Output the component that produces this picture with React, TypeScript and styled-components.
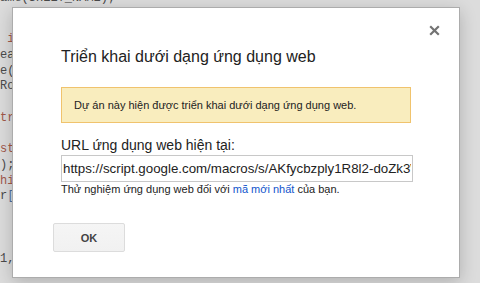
import React from 'react';
import styled, { createGlobalStyle } from 'styled-components';

const GlobalStyle = createGlobalStyle`
  html, body {
    margin: 0;
    padding: 0;
    background: #dcdcdc;
  }
  * {
    box-sizing: border-box;
  }
`;

type Tone = 'plain' | 'keyword' | 'bracket';

interface CodeLine {
  parts: { text: string; tone: Tone }[];
}

const codeLines: CodeLine[] = [
  { parts: [{ text: 'ame(SHEET_NAME);', tone: 'plain' }] },
  { parts: [] },
  { parts: [{ text: ' if (sheet == null) {', tone: 'keyword' }] },
  { parts: [{ text: 'eate', tone: 'plain' }] },
  { parts: [{ text: 'e(', tone: 'plain' }, { text: 'SHEET_NAME', tone: 'plain' }] },
  { parts: [{ text: 'Row(', tone: 'plain' }] },
  { parts: [] },
  { parts: [{ text: 'try', tone: 'keyword' }] },
  { parts: [] },
  { parts: [{ text: 'st', tone: 'keyword' }] },
  { parts: [{ text: ');', tone: 'plain' }] },
  { parts: [{ text: 'hile', tone: 'keyword' }] },
  { parts: [{ text: 'r', tone: 'plain' }, { text: '[', tone: 'bracket' }] },
  { parts: [] },
  { parts: [] },
  { parts: [] },
  { parts: [{ text: '1,', tone: 'plain' }] },
];

const toneColor: Record<Tone, string> = {
  plain: '#4a4a4a',
  keyword: '#a0584a',
  bracket: '#4d6f9e',
};

export default function App() {
  return (
    <>
      <GlobalStyle />
      <Page>
        <CodeBackdrop>
          {codeLines.map((line, i) => (
            <CodeRow key={i} $first={i === 0}>
              {line.parts.map((p, j) => (
                <Token key={j} $tone={p.tone}>
                  {p.text}
                </Token>
              ))}
            </CodeRow>
          ))}
        </CodeBackdrop>

        <Dialog role="dialog">
          <CloseButton aria-label="Đóng">
            <svg width="11" height="11" viewBox="0 0 11 11">
              <path d="M1.2 1.2 L9.8 9.8 M9.8 1.2 L1.2 9.8" stroke="#737373" strokeWidth="2.2" strokeLinecap="butt" />
            </svg>
          </CloseButton>
          <Body>
            <Title>Triển khai dưới dạng ứng dụng web</Title>
            <Notice>Dự án này hiện được triển khai dưới dạng ứng dụng web.</Notice>
            <FieldLabel>URL ứng dụng web hiện tại:</FieldLabel>
            <UrlInput readOnly value="https://script.google.com/macros/s/AKfycbzply1R8l2-doZk3WqXhT7m0y/exec" />
            <Hint>
              Thử nghiệm ứng dụng web đối với <HintLink href="#">mã mới nhất</HintLink> của bạn.
            </Hint>
          </Body>
          <Footer>
            <Button>OK</Button>
          </Footer>
        </Dialog>
      </Page>
    </>
  );
}

const Page = styled.div`
  position: relative;
  width: 480px;
  height: 283px;
  overflow: hidden;
  background: #dcdcdc;
`;

const CodeBackdrop = styled.div`
  display: flex;
  flex-direction: column;
  padding-top: 1px;
  font-family: 'Liberation Mono', 'DejaVu Sans Mono', monospace;
  font-size: 12px;
  line-height: 15.7px;
  white-space: pre;
`;

const CodeRow = styled.div<{ $first?: boolean }>`
  height: 15.7px;
  margin-top: ${(p) => (p.$first ? '-10px' : '0')};
  margin-bottom: ${(p) => (p.$first ? '10px' : '0')};
`;

const Token = styled.span<{ $tone: Tone }>`
  color: ${(p) => toneColor[p.$tone]};
`;

const Dialog = styled.div`
  position: absolute;
  left: 12px;
  top: 7px;
  width: 448px;
  height: 271px;
  background: #fff;
  border: 1px solid #acacac;
  box-shadow: 0 4px 16px rgba(0, 0, 0, 0.2);
  padding: 39px 40px 0 40px;
  display: flex;
  flex-direction: column;
  font-family: Arial, 'Liberation Sans', sans-serif;
  color: #222;
`;

const CloseButton = styled.button`
  position: absolute;
  top: 17px;
  right: 19px;
  width: 11px;
  height: 11px;
  padding: 0;
  border: none;
  background: none;
  display: flex;
  cursor: pointer;
`;

const Body = styled.div`
  display: flex;
  flex-direction: column;
  padding-left: 8px;
  width: 360px;
`;

const Title = styled.div`
  font-size: 16px;
  line-height: 20px;
  color: #222;
  margin-bottom: 20px;
`;

const Notice = styled.div`
  height: 36px;
  width: 350px;
  display: flex;
  align-items: center;
  padding: 0 12px;
  background: #f9edbe;
  border: 1px solid #f0c36d;
  font-size: 11px;
  color: #222;
  margin-bottom: 14px;
`;

const FieldLabel = styled.div`
  font-size: 14px;
  line-height: 17px;
  color: #222;
  margin-bottom: 1px;
`;

const UrlInput = styled.input`
  width: 352px;
  height: 27px;
  padding: 0 1px;
  border: 1px solid #c8c8c8;
  font-family: Arial, 'Liberation Sans', sans-serif;
  font-size: 13.3px;
  color: #222;
  outline: none;
`;

const Hint = styled.div`
  font-size: 11px;
  line-height: 14px;
  color: #222;
`;

const HintLink = styled.a`
  color: #15c;
  text-decoration: none;
`;

const Footer = styled.div`
  display: flex;
  margin-top: 27px;
`;

const Button = styled.button`
  width: 72px;
  height: 29px;
  padding: 0 8px;
  border: 1px solid #dcdcdc;
  border-radius: 2px;
  background: linear-gradient(#f5f5f5, #f1f1f1);
  color: #444;
  font-family: Arial, 'Liberation Sans', sans-serif;
  font-size: 11px;
  font-weight: bold;
  cursor: pointer;
`;
